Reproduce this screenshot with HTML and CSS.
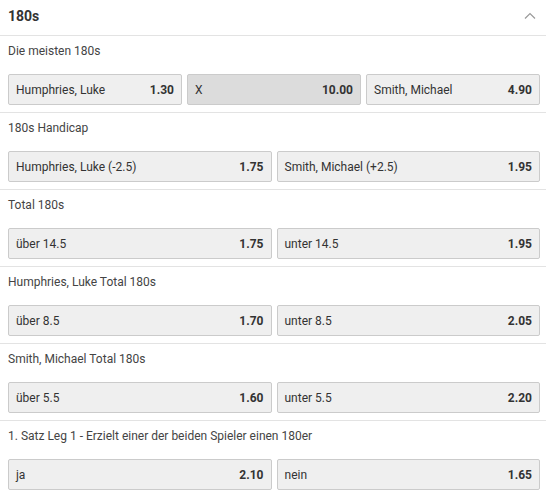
FILE: index.html
```html
<!DOCTYPE html>
<html lang="de">
<head>
<meta charset="utf-8">
<link rel="stylesheet" href="styles.css">
</head>
<body>
<div class="panel">
  <div class="head">
    <span class="title">180s</span>
    <svg class="chev" width="12" height="8" viewBox="0 0 12 8"><path d="M1 6.5 L6 1.5 L11 6.5" fill="none" stroke="#9a9a9a" stroke-width="1.2"/></svg>
  </div>

  <div class="market">
    <div class="label">Die meisten 180s</div>
    <div class="row three">
      <div class="btn"><span>Humphries, Luke</span><b>1.30</b></div>
      <div class="btn dark"><span>X</span><b>10.00</b></div>
      <div class="btn"><span>Smith, Michael</span><b>4.90</b></div>
    </div>
  </div>

  <div class="market">
    <div class="label">180s Handicap</div>
    <div class="row">
      <div class="btn"><span>Humphries, Luke (-2.5)</span><b>1.75</b></div>
      <div class="btn"><span>Smith, Michael (+2.5)</span><b>1.95</b></div>
    </div>
  </div>

  <div class="market">
    <div class="label">Total 180s</div>
    <div class="row">
      <div class="btn"><span>über 14.5</span><b>1.75</b></div>
      <div class="btn"><span>unter 14.5</span><b>1.95</b></div>
    </div>
  </div>

  <div class="market">
    <div class="label">Humphries, Luke Total 180s</div>
    <div class="row">
      <div class="btn"><span>über 8.5</span><b>1.70</b></div>
      <div class="btn"><span>unter 8.5</span><b>2.05</b></div>
    </div>
  </div>

  <div class="market">
    <div class="label">Smith, Michael Total 180s</div>
    <div class="row">
      <div class="btn"><span>über 5.5</span><b>1.60</b></div>
      <div class="btn"><span>unter 5.5</span><b>2.20</b></div>
    </div>
  </div>

  <div class="market">
    <div class="label">1. Satz Leg 1 - Erzielt einer der beiden Spieler einen 180er</div>
    <div class="row">
      <div class="btn"><span>ja</span><b>2.10</b></div>
      <div class="btn"><span>nein</span><b>1.65</b></div>
    </div>
  </div>
</div>
</body>
</html>
```

FILE: styles.css
```css
html, body {
  margin: 0;
  padding: 0;
  background: #fff;
}
body {
  font-family: Roboto, "Liberation Sans", Arial, sans-serif;
  color: #333;
  width: 546px;
  height: 494px;
  overflow: hidden;
}
.head {
  height: 36px;
  box-sizing: border-box;
  padding: 0 10px 4px 8px;
  display: flex;
  align-items: center;
  justify-content: space-between;
  border-bottom: 1px solid #e3e3e3;
}
.title {
  font-size: 14px;
  font-weight: 700;
  color: #333;
}
.chev {
  display: block;
  margin-top: 1px;
}
.market {
  padding: 0 6px 7px 8px;
  border-bottom: 1px solid #e3e3e3;
}
.label {
  font-size: 12px;
  line-height: 16px;
  padding: 7px 0 15px;
  color: #444;
}
.row {
  display: grid;
  grid-template-columns: 1fr 1fr;
  gap: 5px;
}
.row.three {
  grid-template-columns: 1fr 1fr 1fr;
}
.btn {
  height: 31px;
  box-sizing: border-box;
  border: 1px solid #cbcbcb;
  background: #efefef;
  border-radius: 2px;
  display: flex;
  align-items: center;
  justify-content: space-between;
  padding: 0 7px;
  font-size: 12px;
  color: #333;
}
.btn.dark {
  background: #dcdcdc;
}
.btn b {
  font-weight: 700;
  color: #333;
}
```
